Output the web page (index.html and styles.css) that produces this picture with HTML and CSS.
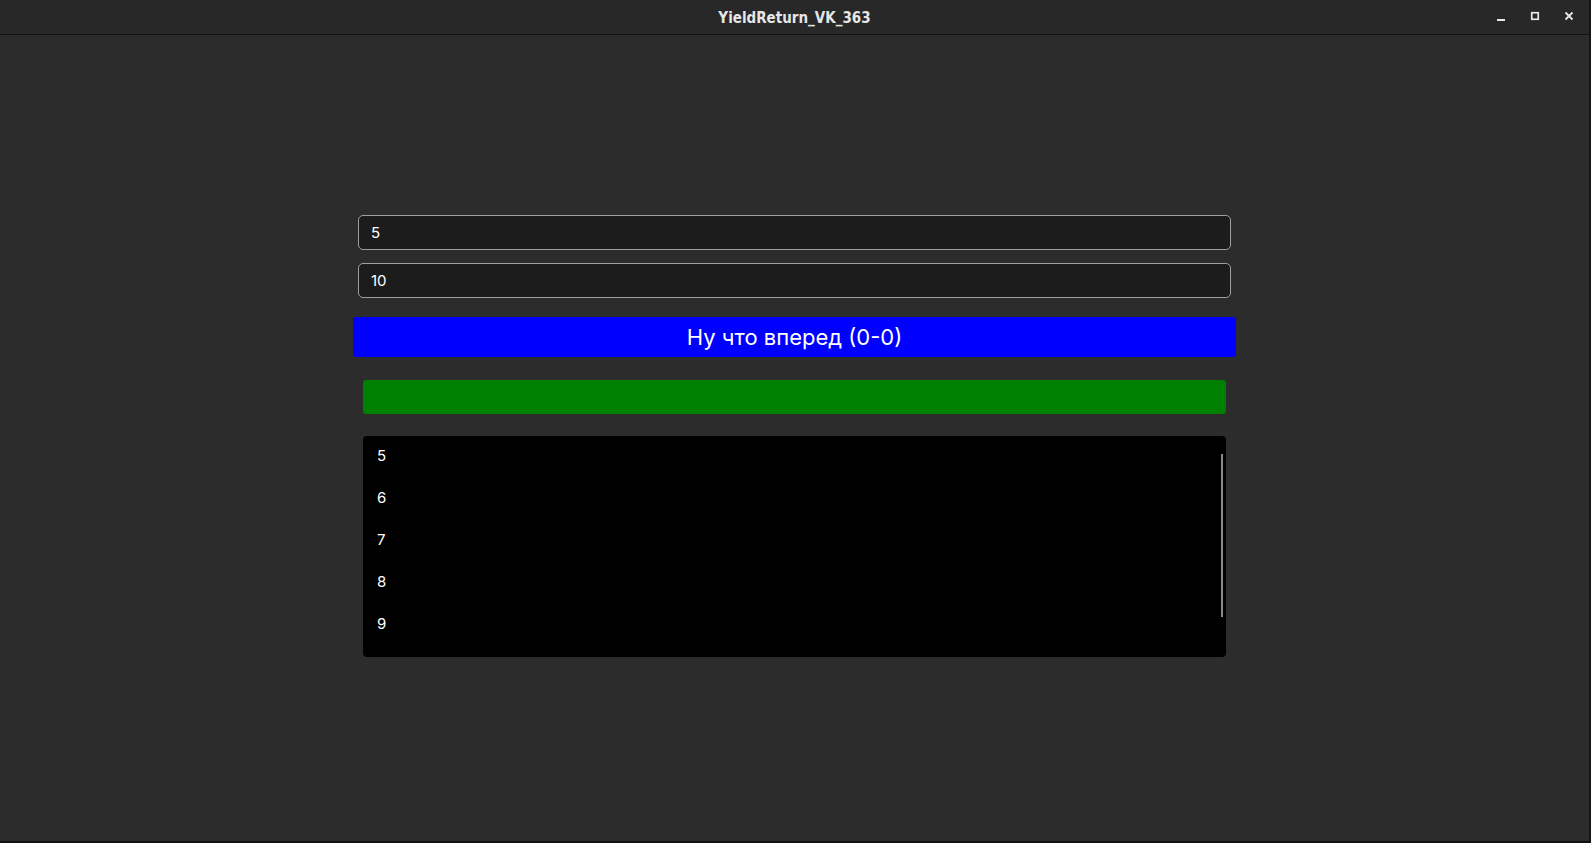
FILE: index.html
```html
<!DOCTYPE html>
<html>
<head>
<meta charset="utf-8">
<link rel="stylesheet" href="styles.css">
</head>
<body>
<div class="window">
  <div class="titlebar">
    <div class="title">YieldReturn_VK_363</div>
    <div class="controls">
      <svg class="ctl" width="12" height="12" viewBox="0 0 12 12"><rect x="2" y="9" width="8" height="2" fill="#e8e8e8"/></svg>
      <svg class="ctl" width="12" height="12" viewBox="0 0 12 12"><rect x="2.75" y="2.75" width="6.5" height="6.5" fill="none" stroke="#e8e8e8" stroke-width="1.7"/></svg>
      <svg class="ctl" width="12" height="12" viewBox="0 0 12 12"><path d="M2.5 2.5 L9.5 9.5 M9.5 2.5 L2.5 9.5" stroke="#e8e8e8" stroke-width="1.8"/></svg>
    </div>
  </div>
  <div class="content">
    <div class="panel">
      <div class="field">5</div>
      <div class="field second">10</div>
      <button class="go">Ну что вперед (0-0)</button>
      <div class="progress"></div>
      <div class="list">
        <div class="item">5</div>
        <div class="item">6</div>
        <div class="item">7</div>
        <div class="item">8</div>
        <div class="item">9</div>
        <div class="scrollbar"></div>
      </div>
    </div>
  </div>
</div>
</body>
</html>
```
FILE: styles.css
```css
html, body {
  margin: 0;
  padding: 0;
  background: #111;
}
body {
  width: 1591px;
  height: 843px;
  overflow: hidden;
}
.window {
  width: 1589px;
  height: 841px;
  border-right: 2px solid #151515;
  border-bottom: 2px solid #111;
  background: #2c2c2c;
  display: flex;
  flex-direction: column;
  font-family: Inter, "Noto Sans", sans-serif;
  color: #fff;
}
.titlebar {
  height: 34px;
  flex: none;
  background: #282828;
  border-bottom: 1px solid #121212;
  display: flex;
  align-items: center;
  justify-content: center;
  position: relative;
  border-top-right-radius: 6px;
}
.title {
  font-family: "DejaVu Sans Condensed", "DejaVu Sans", sans-serif;
  font-stretch: condensed;
  font-weight: bold;
  font-size: 15px;
  color: #e6e6e6;
  margin-top: 1px;
}
.controls {
  position: absolute;
  right: 14px;
  top: 10px;
  display: flex;
  gap: 22px;
}
.ctl { display: block; }
.content {
  flex: 1;
  display: flex;
  flex-direction: column;
  align-items: center;
  padding-top: 180px;
}
.panel {
  width: 883px;
  display: flex;
  flex-direction: column;
}
.field {
  margin: 0 5px;
  height: 33px;
  border: 1px solid #a0a0a0;
  border-radius: 5px;
  background: #1c1c1c;
  padding-left: 12px;
  display: flex;
  align-items: center;
  font-size: 15px;
  color: #ffffff;
}
.field.second { margin-top: 13px; }
.go {
  margin-top: 19px;
  height: 40px;
  border: none;
  border-radius: 3px;
  background: #0000ff;
  color: #fff;
  font-family: Inter, "Noto Sans", sans-serif;
  font-size: 22px;
  padding: 0;
}
.progress {
  margin: 23px 10px 0;
  height: 34px;
  background: #008000;
  border-radius: 3px;
}
.list {
  margin: 22px 10px 0;
  height: 221px;
  background: #000;
  border-radius: 4px;
  position: relative;
  padding-top: 9px;
  box-sizing: border-box;
}
.item {
  height: 42px;
  line-height: 22px;
  padding-left: 14px;
  font-size: 15px;
  color: #ffffff;
}
.scrollbar {
  position: absolute;
  right: 3px;
  top: 18px;
  width: 2px;
  height: 163px;
  background: #8a8a8a;
}
```
